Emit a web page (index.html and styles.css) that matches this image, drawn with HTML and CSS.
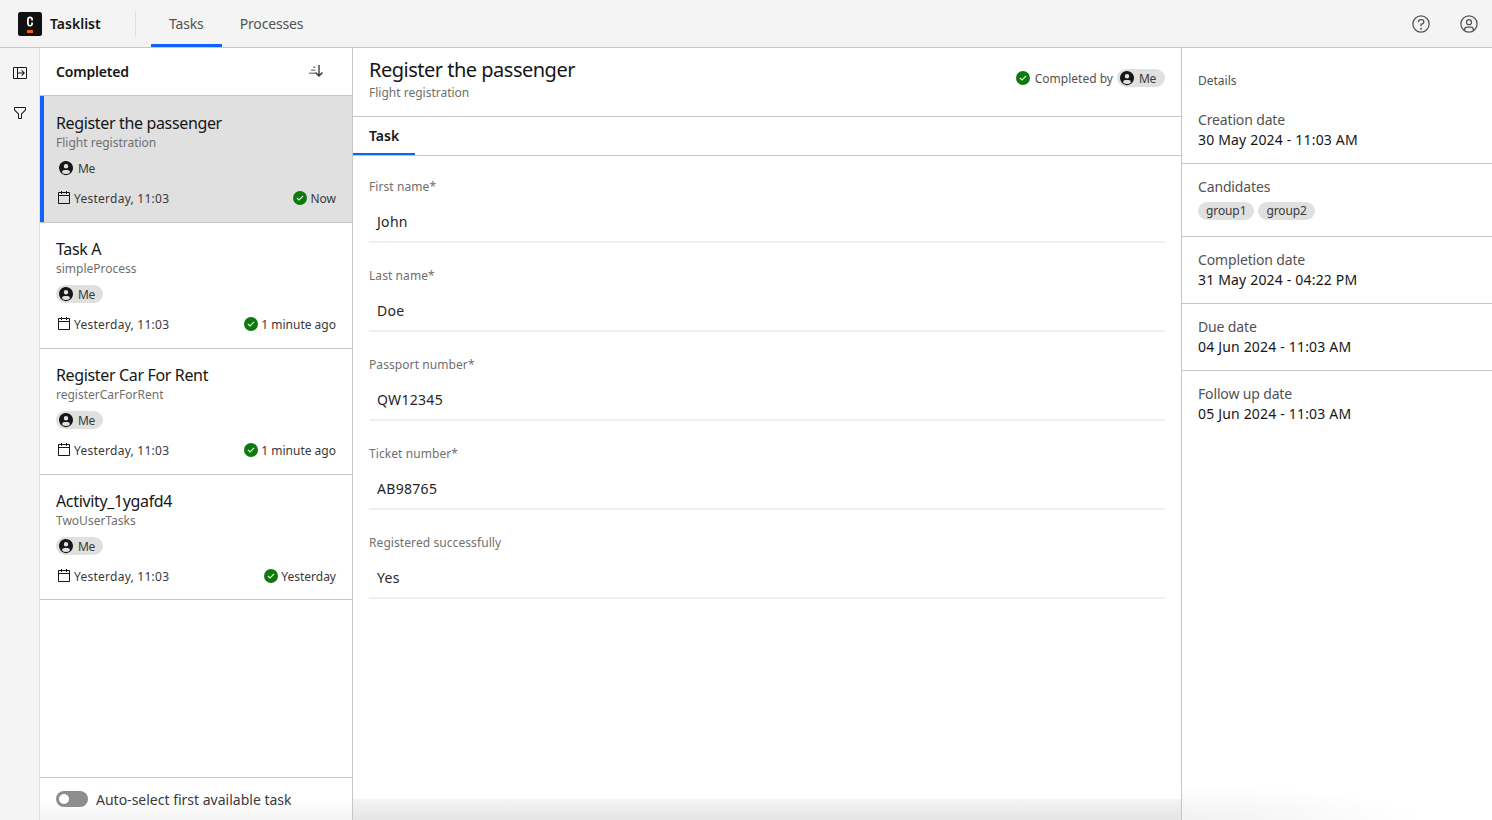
FILE: index.html
```html
<!DOCTYPE html>
<html lang="en">

<head>
    <meta charset="UTF-8">
    <title>Tasklist</title>
    <link rel="stylesheet" href="styles.css">
</head>

<body>
    <svg class="defs" width="0" height="0">
        <symbol id="i-avatar" viewBox="0 0 32 32">
            <path d="M26.7489,24.93A13.9893,13.9893,0,1,0,2,16a13.899,13.899,0,0,0,3.2511,8.93l-.02.0166c.07.0845.15.1567.2222.2392.09.1036.1864.2.28.3008.28.3033.5674.5952.87.87.0915.0831.1864.1612.2792.2417.32.2759.6484.5372.99.7813.0441.0312.0832.0693.1276.1006v-.0127a13.9011,13.9011,0,0,0,16,0V27.48c.0444-.0313.0835-.0694.1276-.1006.3412-.2441.67-.5054.99-.7813.0928-.805.1877-.1586.2792-.2417.3025-.2749.59-.5668.87-.87.0936-.1006.1895-.1972.28-.3008.0719-.0825.1522-.1547.2222-.2392ZM16,8a4.5,4.5,0,1,1-4.5,4.5A4.5,4.5,0,0,1,16,8ZM8.0071,24.93A4.9957,4.9957,0,0,1,13,20h6a4.9958,4.9958,0,0,1,4.9929,4.93,11.94,11.94,0,0,1-15.9858,0Z" />
        </symbol>
        <symbol id="i-calendar" viewBox="0 0 32 32">
            <path d="M26,4h-4V2h-2v2h-8V2h-2v2H6C4.9,4,4,4.9,4,6v20c0,1.1,0.9,2,2,2h20c1.1,0,2-0.9,2-2V6C28,4.9,27.1,4,26,4z M26,26H6V12h20V26z M26,10H6V6h4v2h2V6h8v2h2V6h4V10z" />
        </symbol>
        <symbol id="i-check" viewBox="0 0 32 32">
            <path fill="#fff" d="M14,21.5908l-5-5L10.5906,15,14,18.4092,21.41,11l1.5957,1.5859Z" />
            <path fill="#0e7a0d" d="M16,2A14,14,0,1,0,30,16,14,14,0,0,0,16,2ZM14,21.5908l-5-5L10.5906,15,14,18.4092,21.41,11l1.5957,1.5859Z" />
        </symbol>
    </svg>

    <header class="topbar">
        <div class="brand">
            <svg class="logo" viewBox="0 0 24 24" width="24" height="24">
                <rect width="24" height="24" rx="2.5" fill="#111" />
                <rect x="9" y="18" width="6" height="3" fill="#fc5d0d" />
                <path fill="#fff" d="M9 8.2C9 5.9 10 4.6 12 4.6s3 1.2 3 3.3v.7h-1.800v-.8c0-1-.4-1.600-1.200-1.600s-1.200.6-1.200 1.700v3.400c0 1.100.4 1.700 1.200 1.700s1.200-.6 1.200-1.600v-.8H15v.7c0 2.100-1 3.300-3 3.300s-3-1.300-3-3.600z" />
            </svg>
            <span class="brand-name">Tasklist</span>
        </div>
        <nav class="nav">
            <a class="nav-link active">Tasks</a>
            <a class="nav-link">Processes</a>
        </nav>
        <div class="top-actions">
            <svg class="top-icon" viewBox="0 0 32 32">
                <path d="M16,2A14,14,0,1,0,30,16,14,14,0,0,0,16,2Zm0,26A12,12,0,1,1,28,16,12,12,0,0,1,16,28Z" />
                <circle cx="16" cy="23.5" r="1.5" />
                <path d="M17,8H15.5A4.49,4.49,0,0,0,11,12.5V13h2v-.5A2.5,2.5,0,0,1,15.5,10H17a2.5,2.5,0,0,1,0,5H15v4.5h2V17a4.5,4.5,0,0,0,0-9Z" />
            </svg>
            <svg class="top-icon" viewBox="0 0 32 32">
                <path d="M16,8a5,5,0,1,0,5,5A5,5,0,0,0,16,8Zm0,8a3,3,0,1,1,3-3A3.0034,3.0034,0,0,1,16,16Z" />
                <path d="M16,2A14,14,0,1,0,30,16,14.0158,14.0158,0,0,0,16,2ZM10,26.3765V25a3.0033,3.0033,0,0,1,3-3h6a3.0033,3.0033,0,0,1,3,3v1.3765a11.8989,11.8989,0,0,1-12,0Zm13.9925-1.4507A5.0016,5.0016,0,0,0,19,20H13a5.0016,5.0016,0,0,0-4.9925,4.9258,12,12,0,1,1,15.985,0Z" />
            </svg>
        </div>
    </header>

    <div class="layout">
        <aside class="rail">
            <svg class="rail-icon" viewBox="0 0 32 32">
                <path d="M28,4H4A2,2,0,0,0,2,6V26a2,2,0,0,0,2,2H28a2,2,0,0,0,2-2V6A2,2,0,0,0,28,4ZM4,6h6V26H4ZM28,26H12V17H22.17l-3.58,3.59L20,22l6-6-6-6-1.41,1.41L22.17,15H12V6H28Z" />
            </svg>
            <svg class="rail-icon" viewBox="0 0 32 32">
                <path d="M18,28H14a2,2,0,0,1-2-2V18.41L4.59,11A2,2,0,0,1,4,9.59V6A2,2,0,0,1,6,4H26a2,2,0,0,1,2,2V9.59A2,2,0,0,1,27.41,11L20,18.41V26A2,2,0,0,1,18,28ZM6,6V9.59l8,8V26h4V17.59l8-8V6Z" />
            </svg>
        </aside>

        <section class="tasks">
            <div class="tasks-head">
                <h2>Completed</h2>
                <svg class="sort-icon" viewBox="0 0 16 16" width="16" height="16">
                    <path fill="#8d8d8d" d="M5 2.500h2.500v1.500H5zM3 5.500h4.500V7H3zM1 8.500h6.500V10H1z" />
                    <path fill="#393939" d="M10.300 1h1.400v9.300l2.300-2.300 1 1-4 4-4-4 1-1 2.300 2.300z" />
                </svg>
            </div>

            <article class="task selected">
                <h3>Register the passenger</h3>
                <p class="process">Flight registration</p>
                <div class="assignee plain"><svg class="avatar"><use href="#i-avatar" /></svg>Me</div>
                <div class="task-foot">
                    <span class="stamp date"><svg class="cal"><use href="#i-calendar" /></svg>Yesterday, 11:03</span>
                    <span class="stamp"><svg class="check"><use href="#i-check" /></svg>Now</span>
                </div>
            </article>

            <article class="task">
                <h3>Task A</h3>
                <p class="process">simpleProcess</p>
                <div class="assignee"><svg class="avatar"><use href="#i-avatar" /></svg>Me</div>
                <div class="task-foot">
                    <span class="stamp date"><svg class="cal"><use href="#i-calendar" /></svg>Yesterday, 11:03</span>
                    <span class="stamp"><svg class="check"><use href="#i-check" /></svg>1 minute ago</span>
                </div>
            </article>

            <article class="task">
                <h3>Register Car For Rent</h3>
                <p class="process">registerCarForRent</p>
                <div class="assignee"><svg class="avatar"><use href="#i-avatar" /></svg>Me</div>
                <div class="task-foot">
                    <span class="stamp date"><svg class="cal"><use href="#i-calendar" /></svg>Yesterday, 11:03</span>
                    <span class="stamp"><svg class="check"><use href="#i-check" /></svg>1 minute ago</span>
                </div>
            </article>

            <article class="task">
                <h3>Activity_1ygafd4</h3>
                <p class="process">TwoUserTasks</p>
                <div class="assignee"><svg class="avatar"><use href="#i-avatar" /></svg>Me</div>
                <div class="task-foot">
                    <span class="stamp date"><svg class="cal"><use href="#i-calendar" /></svg>Yesterday, 11:03</span>
                    <span class="stamp"><svg class="check"><use href="#i-check" /></svg>Yesterday</span>
                </div>
            </article>

            <div class="auto-select">
                <span class="toggle"><span class="knob"></span></span>
                <span>Auto-select first available task</span>
            </div>
        </section>

        <main class="main">
            <div class="main-head">
                <div>
                    <h1>Register the passenger</h1>
                    <p class="process">Flight registration</p>
                </div>
                <div class="completed-by">
                    <svg class="check"><use href="#i-check" /></svg>
                    <span>Completed by</span>
                    <div class="assignee"><svg class="avatar"><use href="#i-avatar" /></svg>Me</div>
                </div>
            </div>

            <div class="tabs"><span class="tab">Task</span></div>

            <form class="form">
                <div class="field"><label>First name*</label><div class="value">John</div></div>
                <div class="field"><label>Last name*</label><div class="value">Doe</div></div>
                <div class="field"><label>Passport number*</label><div class="value">QW12345</div></div>
                <div class="field"><label>Ticket number*</label><div class="value">AB98765</div></div>
                <div class="field"><label>Registered successfully</label><div class="value">Yes</div></div>
            </form>

            <div class="main-foot"></div>
        </main>

        <aside class="details">
            <div class="details-title">Details</div>
            <div class="detail first"><h4>Creation date</h4><p>30 May 2024 - 11:03 AM</p></div>
            <div class="detail">
                <h4>Candidates</h4>
                <div class="tags"><span class="tag">group1</span><span class="tag">group2</span></div>
            </div>
            <div class="detail"><h4>Completion date</h4><p>31 May 2024 - 04:22 PM</p></div>
            <div class="detail"><h4>Due date</h4><p>04 Jun 2024 - 11:03 AM</p></div>
            <div class="detail"><h4>Follow up date</h4><p>05 Jun 2024 - 11:03 AM</p></div>
        </aside>
    </div>
</body>

</html>
```

FILE: styles.css
```css
* {
    box-sizing: border-box;
}

html,
body {
    height: 100%;
}

body {
    margin: 0;
    font-family: "Noto Sans", "Open Sans", sans-serif;
    font-size: 14px;
    color: #161616;
    background: #fff;
    overflow: hidden;
}

h1,
h2,
h3,
h4,
p {
    margin: 0;
    font-weight: 400;
}

.defs {
    position: absolute;
}

.topbar {
    height: 48px;
    display: flex;
    align-items: stretch;
    background: #f4f4f4;
    border-bottom: 1px solid #c6c6c6;
}

.brand {
    width: 136px;
    display: flex;
    align-items: center;
    gap: 8px;
    padding-left: 18px;
}

.brand-name {
    font-weight: 600;
    font-size: 14px;
}

.nav {
    display: flex;
    position: relative;
    padding-left: 15px;
}

.nav::before {
    content: "";
    position: absolute;
    left: -1px;
    top: 12px;
    height: 24px;
    width: 1px;
    background: #e0e0e0;
}

.nav-link {
    display: flex;
    align-items: center;
    padding: 0 18px;
    height: 47px;
    color: #525252;
    font-size: 14px;
    letter-spacing: -0.15px;
}

.nav-link.active {
    box-shadow: inset 0 -3px 0 #0f62fe;
}

.top-actions {
    margin-left: auto;
    display: flex;
    align-items: center;
    gap: 28px;
    padding-right: 13px;
}

.top-icon {
    width: 20px;
    height: 20px;
    fill: #525252;
}

.layout {
    height: calc(100% - 48px);
    display: flex;
}

.rail {
    width: 40px;
    flex: none;
    background: #f4f4f4;
    border-right: 1px solid #e0e0e0;
    display: flex;
    flex-direction: column;
    align-items: center;
    gap: 24px;
    padding: 17px 0 0 1px;
}

.rail-icon {
    width: 16px;
    height: 16px;
    fill: #161616;
}

.tasks {
    width: 313px;
    flex: none;
    display: flex;
    flex-direction: column;
    border-right: 1px solid #c6c6c6;
}

.tasks-head {
    height: 48px;
    flex: none;
    display: flex;
    align-items: center;
    justify-content: space-between;
    padding: 0 28px 0 16px;
    border-bottom: 1px solid #c6c6c6;
}

.tasks-head h2 {
    font-size: 14px;
    font-weight: 600;
    letter-spacing: -0.2px;
}

.task {
    height: 126px;
    flex: none;
    padding: 16px 16px 0;
    border-bottom: 1px solid #c6c6c6;
}

.task:last-of-type {
    height: 125px;
}

.task.selected {
    height: 127px;
    background: #e0e0e0;
    box-shadow: inset 4px 0 0 #0f62fe;
    padding-top: 17px;
}

.task h3 {
    font-size: 16px;
    line-height: 20px;
    letter-spacing: -0.35px;
}

.process {
    font-size: 12px;
    line-height: 16px;
    margin-top: 2px;
    color: #6f6f6f;
}

.assignee {
    display: inline-flex;
    align-items: center;
    gap: 4px;
    height: 18px;
    padding: 0 8px 0 2px;
    border-radius: 9px;
    background: #e0e0e0;
    font-size: 12px;
    color: #393939;
    letter-spacing: -0.3px;
}

.task .assignee {
    margin-top: 8px;
    display: flex;
    width: fit-content;
}

.completed-by .assignee {
    padding-right: 9px;
}

.avatar {
    width: 16px;
    height: 16px;
    fill: #161616;
}

.task-foot {
    display: flex;
    justify-content: space-between;
    margin-top: 13px;
}

.stamp {
    display: inline-flex;
    align-items: center;
    gap: 2px;
    height: 16px;
    font-size: 12px;
    color: #393939;
}

.stamp.date {
    letter-spacing: 0.25px;
}

.cal {
    width: 16px;
    height: 16px;
    fill: #161616;
}

.check {
    width: 16px;
    height: 16px;
    flex: none;
}

.auto-select {
    margin-top: auto;
    height: 43px;
    flex: none;
    display: flex;
    align-items: center;
    gap: 8px;
    padding-left: 16px;
    border-top: 1px solid #c6c6c6;
    background: linear-gradient(#fff 50%, #f4f4f4);
    color: #393939;
}

.toggle {
    width: 32px;
    height: 16px;
    border-radius: 8px;
    background: #8d8d8d;
    display: flex;
    align-items: center;
    padding-left: 3px;
}

.knob {
    width: 10px;
    height: 10px;
    border-radius: 50%;
    background: #fff;
}

.main {
    flex: 1;
    display: flex;
    flex-direction: column;
    border-right: 1px solid #c6c6c6;
}

.main-head {
    height: 69px;
    flex: none;
    display: flex;
    justify-content: space-between;
    padding: 9px 16px 0;
    border-bottom: 1px solid #c6c6c6;
}

.main-head h1 {
    font-size: 20px;
    line-height: 26px;
    letter-spacing: -0.5px;
}

.completed-by {
    display: flex;
    align-items: center;
    gap: 4px;
    height: 20px;
    margin-top: 11px;
    font-size: 12px;
    color: #525252;
}

.tabs {
    height: 39px;
    flex: none;
    border-bottom: 1px solid #c6c6c6;
    display: flex;
}

.tab {
    height: 38px;
    padding: 0 16px 2px;
    display: flex;
    align-items: center;
    font-weight: 600;
    box-shadow: inset 0 -2px 0 #0f62fe;
}

.form {
    flex: 1;
    padding: 23px 16px 0;
}

.field {
    height: 89px;
}

.field label {
    display: block;
    font-size: 12px;
    line-height: 16px;
    color: #6f6f6f;
    letter-spacing: 0.08px;
}

.value {
    margin-top: 8px;
    height: 40px;
    padding: 0 8px 1px;
    display: flex;
    align-items: center;
    border-bottom: 2px solid #efefef;
    letter-spacing: 0.3px;
    color: #262626;
}

.main-foot {
    height: 21px;
    flex: none;
    background: linear-gradient(#f4f4f4, #e4e4e4);
}

.details {
    flex: none;
    width: 310px;
    background: radial-gradient(ellipse 240px 34px at 0 100%, #f1f1f1, #fff);
}

.details-title {
    padding: 25px 16px 0;
    font-size: 12px;
    line-height: 16px;
    color: #525252;
}

.detail {
    padding: 13px 16px;
    border-bottom: 1px solid #c6c6c6;
    line-height: 20px;
}

.detail.first {
    padding-top: 21px;
}

.detail:last-child {
    border-bottom: 0;
}

.detail h4 {
    color: #525252;
    font-size: 14px;
    letter-spacing: -0.15px;
}

.detail p {
    letter-spacing: 0.18px;
}

.tags {
    display: flex;
    gap: 4px;
    margin-top: 5px;
    margin-bottom: 3px;
}

.tag {
    height: 18px;
    padding: 0 8px;
    border-radius: 9px;
    background: #e0e0e0;
    font-size: 12px;
    line-height: 18px;
    color: #393939;
    letter-spacing: -0.1px;
}
```
